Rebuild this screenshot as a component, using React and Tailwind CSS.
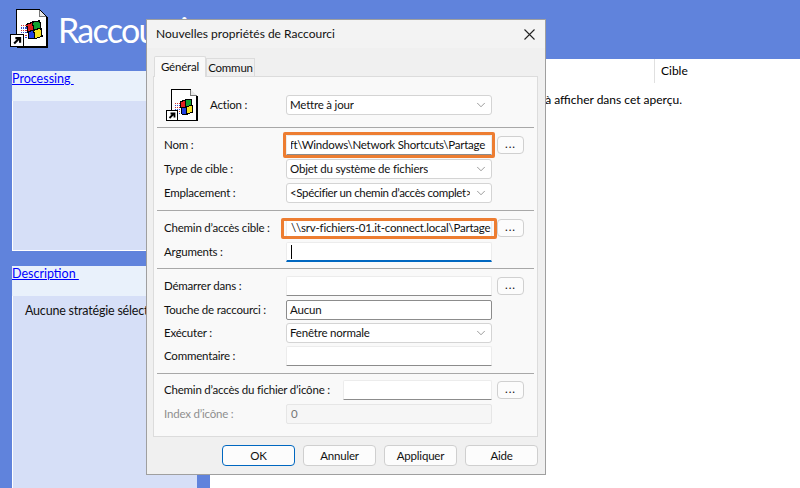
import React from "react";
import { ChevronDown } from "lucide-react";

const ShortcutIcon = ({ className }) => (
  <svg viewBox="0 0 32 32" className={className} shapeRendering="crispEdges">
    {/* page */}
    <path d="M5.5 0.5H24.5L30.5 6.5V31.5H5.5Z" fill="#fff" stroke="#000" />
    <path d="M24.5 0.5V6.5H30.5" fill="#e8e8e8" stroke="#777" />
    <path d="M31.5 7V32H6" fill="none" stroke="#000" />
    {/* flag */}
    <path d="M14 13L19 11L20 18L15 19Z" fill="#e02020" stroke="#000" />
    <path d="M19 11L25 10L26 16L20 18Z" fill="#10a030" stroke="#000" />
    <path d="M15 19L20 18L21 25L16 25Z" fill="#2040e0" stroke="#000" />
    <path d="M20 18L26 16L27 23L21 25Z" fill="#f4e020" stroke="#000" />
    <path d="M9 14H14M9 18H15M9 22H15" stroke="#d03030" strokeDasharray="1 1" />
    <path d="M9 16H14M9 20H15M9 24H15" stroke="#3050d0" strokeDasharray="1 1" />
    {/* shortcut arrow */}
    <rect x="0.5" y="21.5" width="11" height="10" fill="#fff" stroke="#000" />
    <path d="M3.5 29L7.5 25M4.5 24.5H8.5V28.5" fill="none" stroke="#000" strokeWidth="1.8" shapeRendering="auto" />
  </svg>
);

const Label = ({ children, disabled, w = "w-[122px]" }) => (
  <div className={`${w} shrink-0 whitespace-nowrap ${disabled ? "text-[#8f8f8f]" : ""}`}>{children}</div>
);

const Row = ({ h = "h-[24px]", children }) => (
  <div className={`${h} flex items-center pl-[10px]`}>{children}</div>
);

const Select = ({ children, className = "w-[206px]" }) => (
  <div className={`${className} h-[20px] shrink-0 flex items-center justify-between bg-white border border-[#d4d4d4] rounded-[3px] pl-[3px] pr-[3px]`}>
    <span className="overflow-hidden whitespace-nowrap">{children}</span>
    <ChevronDown size={14} strokeWidth={1} className="shrink-0 ml-[4px] text-[#555]" />
  </div>
);

const Input = ({ children, focused, className = "w-[206px]" }) => (
  <div
    className={`${className} h-[20px] shrink-0 flex items-center bg-white px-[4px] overflow-hidden whitespace-nowrap rounded-t-[2px] border-x border-t border-[#ececec] ${
      focused ? "border-b-2 border-b-[#0067c0]" : "border-b border-b-[#8c8c8c]"
    }`}
  >
    {children}
  </div>
);

const Browse = () => (
  <div className="w-[27px] h-[18px] ml-[5px] shrink-0 flex items-center justify-center bg-[#fcfcfc] border border-[#d0d0d0] rounded-[4px] leading-none pb-[2px] tracking-[1px]">
    ...
  </div>
);

const Divider = () => <div className="h-px bg-[#a8a8a8] mx-[3px]" />;

const FooterButton = ({ children, primary }) => (
  <div
    className={`w-[73px] h-[21px] flex items-center justify-center rounded-[4px] border bg-[#fcfcfc] ${
      primary ? "border-[#0067c0]" : "border-[#cfcfcf]"
    }`}
  >
    {children}
  </div>
);

const SidePanel = ({ title, height, children }) => (
  <div className="shrink-0 border-b border-l border-white" style={{ height }}>
    <div className="h-[30px] -ml-px bg-[#e9f1fb] text-[#0000ff] underline text-[12.5px] leading-[16px] whitespace-pre">{title + " "}</div>
    <div className="bg-[#d6dff7] h-[calc(100%-30px)] pl-[12px] pt-[6px]">{children}</div>
  </div>
);

export default function App() {
  return (
    <div className="relative w-[800px] h-[488px] overflow-hidden bg-[#6083dc] text-[12px] text-[#111] font-['Lato','Roboto',sans-serif]">
      {/* page behind the dialog */}
      <div className="h-[59px] flex items-start pl-[10px] pt-[8px]">
        <ShortcutIcon className="w-[38px] h-[40px]" />
        <div className="ml-[10px] text-[34px] leading-[44px] tracking-[-1.7px] text-white whitespace-nowrap">Raccourcis</div>
      </div>
      <div className="flex h-[429px]">
        <div className="w-[210px] pl-[12px] pr-[13px] pt-[12px] flex flex-col gap-[15px]">
          <SidePanel title="Processing" height="180px" />
          <SidePanel title="Description" height="230px">
            <div className="whitespace-nowrap text-[12.5px] tracking-[-0.2px]">Aucune stratégie sélectionnée</div>
          </SidePanel>
        </div>
        <div className="flex-1 bg-white text-black">
          <div className="h-[24px] flex justify-end">
            <div className="w-[146px] border-l border-[#e0e0e0] pl-[6px] leading-[24px]">Cible</div>
          </div>
          <div className="mt-[8px] text-right pr-[118px] whitespace-nowrap">Il n'y a aucun élément à afficher dans cet aperçu.</div>
        </div>
      </div>

      {/* dialog window */}
      <div className="absolute left-[146px] top-[19px] w-[400px] h-[456px] flex flex-col bg-[#f0f0f0] border border-[#9f9f9f] text-[11.5px] tracking-[-0.2px]">
        <div className="h-[28px] shrink-0 flex items-center justify-between bg-[#f3f3f3] pl-[9px] pr-[10px] text-[12px] tracking-normal">
          <span>Nouvelles propriétés de Raccourci</span>
          <svg viewBox="0 0 11 11" className="w-[11px] h-[11px]">
            <path d="M0.5 0.5L10.5 10.5M10.5 0.5L0.5 10.5" stroke="#222" strokeWidth="1.1" fill="none" />
          </svg>
        </div>
        <div className="pl-[7px] h-[28px] shrink-0 flex items-end">
          <div className="w-[52px] h-[21px] flex items-center justify-center bg-[#f9f9f9] border border-b-0 border-[#dcdcdc] rounded-t-[2px] relative top-px z-10">Général</div>
          <div className="w-[49px] h-[18px] flex items-center justify-center bg-[#f0f0f0] border border-b-0 border-[#dcdcdc]">Commun</div>
        </div>
        <div className="mx-[6px] w-[385px] h-[361px] shrink-0 bg-[#f9f9f9] border border-[#dcdcdc]">
          <div className="h-[50px] flex items-center pl-[12px] pt-[6px]">
            <ShortcutIcon className="w-[32px] h-[32px]" />
            <div className="w-[76px] ml-[12px] shrink-0">Action :</div>
            <Select>Mettre à jour</Select>
          </div>
          <Divider />
          <div className="pt-[5px] pb-[6px]">
            <Row>
              <Label>Nom :</Label>
              <div className="relative">
                <Input>
                  <div className="w-full flex justify-end overflow-hidden pr-[2px] tracking-[-0.25px]">
                    <span className="shrink-0">%AppData%\Microsoft\Windows\Network Shortcuts\Partage</span>
                  </div>
                </Input>
                <div className="absolute -left-[3px] -right-[3px] -top-[3px] -bottom-[3px] border-[3px] border-[#ed7d31] rounded-[2px]" />
              </div>
              <Browse />
            </Row>
            <Row>
              <Label>Type de cible :</Label>
              <Select>Objet du système de fichiers</Select>
            </Row>
            <Row h="h-[23px]">
              <Label>Emplacement :</Label>
              <Select>
                <span className="tracking-[-0.35px]">&lt;Spécifier un chemin d’accès complet&gt;</span>
              </Select>
            </Row>
          </div>
          <Divider />
          <div className="pt-[5px] pb-[4px]">
            <Row>
              <Label>Chemin d’accès cible :</Label>
              <div className="relative">
                <Input>
                  <span>\\srv-fichiers-01.it-connect.local\Partage</span>
                </Input>
                <div className="absolute -left-[5px] -right-[5px] top-0 -bottom-px border-[3px] border-[#ed7d31] rounded-[2px]" />
              </div>
              <Browse />
            </Row>
            <Row>
              <Label>Arguments :</Label>
              <Input focused>
                <span className="w-px h-[14px] bg-black" />
              </Input>
            </Row>
          </div>
          <Divider />
          <div className="pt-[5px] pb-[5px]">
            <Row>
              <Label>Démarrer dans :</Label>
              <Input />
              <Browse />
            </Row>
            <Row h="h-[23px]">
              <Label>Touche de raccourci :</Label>
              <div className="w-[206px] h-[20px] flex items-center bg-white px-[3px] border border-[#8c8c8c] rounded-[2px]">Aucun</div>
            </Row>
            <Row h="h-[23px]">
              <Label>Exécuter :</Label>
              <Select>Fenêtre normale</Select>
            </Row>
            <Row>
              <Label>Commentaire :</Label>
              <Input />
            </Row>
          </div>
          <Divider />
          <div className="pt-[4px]">
            <Row>
              <Label w="w-[179px]">Chemin d’accès du fichier d’icône :</Label>
              <Input className="w-[149px]" />
              <Browse />
            </Row>
            <Row h="h-[23px]">
              <Label disabled>Index d’icône :</Label>
              <div className="w-[206px] h-[20px] flex items-center bg-[#f6f6f6] px-[4px] text-[#777] border border-[#e6e6e6] rounded-[2px]">0</div>
            </Row>
          </div>
        </div>
        <div className="flex justify-end gap-[8px] pr-[7px] pt-[8px]">
          <FooterButton primary>OK</FooterButton>
          <FooterButton>Annuler</FooterButton>
          <FooterButton>Appliquer</FooterButton>
          <FooterButton>Aide</FooterButton>
        </div>
      </div>
    </div>
  );
}
